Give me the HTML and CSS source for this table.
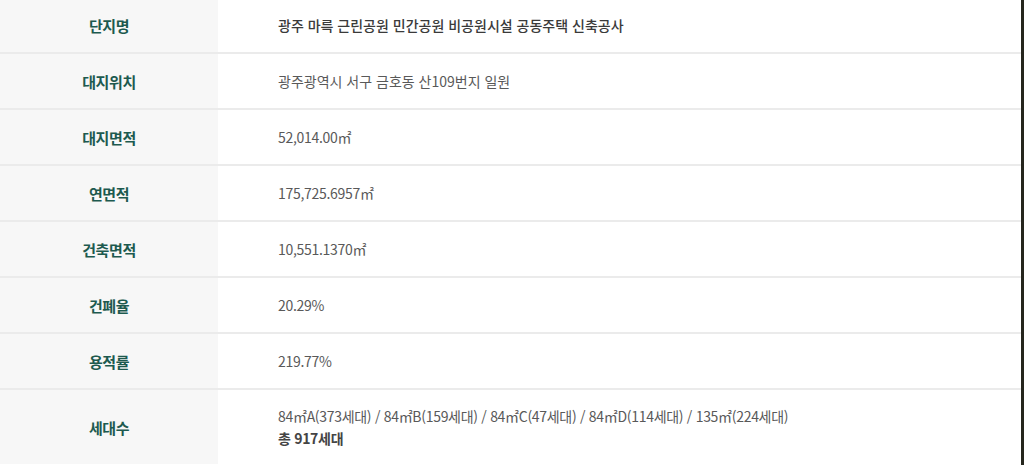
FILE: index.html
```html
<!DOCTYPE html>
<html lang="ko">
<head>
<meta charset="utf-8">
<link rel="stylesheet" href="styles.css">
</head>
<body>
<div class="page">
  <div class="info">
    <div class="row"><div class="th">단지명</div><div class="td text strong-line">광주 마륵 근린공원 민간공원 비공원시설 공동주택 신축공사</div></div>
    <div class="row"><div class="th">대지위치</div><div class="td text">광주광역시 서구 금호동 산109번지 일원</div></div>
    <div class="row"><div class="th">대지면적</div><div class="td">52,014.00㎡</div></div>
    <div class="row"><div class="th">연면적</div><div class="td">175,725.6957㎡</div></div>
    <div class="row"><div class="th">건축면적</div><div class="td">10,551.1370㎡</div></div>
    <div class="row"><div class="th">건폐율</div><div class="td">20.29%</div></div>
    <div class="row"><div class="th">용적률</div><div class="td">219.77%</div></div>
    <div class="row tall"><div class="th">세대수</div><div class="td">84㎡A(373세대) / 84㎡B(159세대) / 84㎡C(47세대) / 84㎡D(114세대) / 135㎡(224세대)<br><strong>총 917세대</strong></div></div>
  </div>
  <div class="edge"></div>
</div>
</body>
</html>
```
FILE: styles.css
```css
html, body {
  margin: 0;
  padding: 0;
  background: #fff;
  overflow: hidden;
}
body {
  font-family: "Noto Sans CJK KR", "Noto Sans", sans-serif;
  font-size: 14px;
  color: #595959;
}
.page {
  display: flex;
  height: 465px;
}
.info {
  flex: 1;
  margin-top: -2px;
}
.edge {
  width: 3px;
  background: #25261d;
}
.row {
  display: flex;
  height: 54px;
  border-bottom: 2px solid #ebebeb;
}
.row.tall {
  height: 74px;
  border-bottom: none;
}
.th {
  width: 218px;
  flex: none;
  background: #f7f7f7;
  display: flex;
  align-items: center;
  justify-content: center;
  font-weight: bold;
  color: #1d5a4f;
  font-size: 15px;
  letter-spacing: -0.4px;
}
.td {
  flex: 1;
  display: flex;
  flex-direction: column;
  justify-content: center;
  padding-left: 60px;
  line-height: 22px;
  letter-spacing: -0.3px;
}
.td.text {
  letter-spacing: 0;
}
.td.strong-line {
  font-weight: 500;
  color: #3a3a3a;
}
.td strong {
  font-weight: bold;
  color: #444;
}
.tall .td {
  display: block;
  padding-top: 15px;
  box-sizing: border-box;
}
```
